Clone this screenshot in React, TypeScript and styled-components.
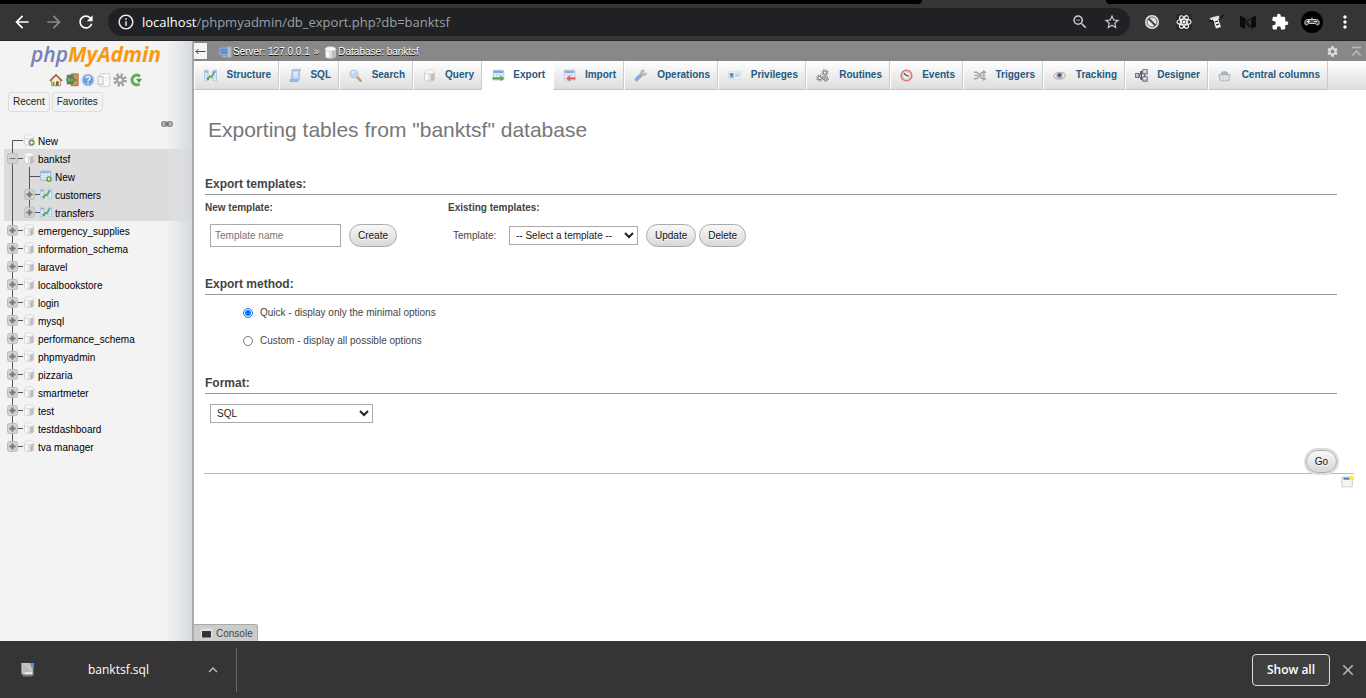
import React from "react";
import styled, { createGlobalStyle } from "styled-components";
import {
  MdArrowBack,
  MdArrowForward,
  MdClose,
  MdExpandLess,
  MdExtension,
  MdInfoOutline,
  MdMoreVert,
  MdRefresh,
  MdSettings,
  MdStarBorder,
  MdZoomOut,
} from "react-icons/md";

const GlobalStyle = createGlobalStyle`
  * { box-sizing: border-box; }
  body {
    margin: 0;
    font-family: "Liberation Sans", Arial, sans-serif;
    font-size: 10px;
    line-height: 12px;
    color: #444;
    background: #fff;
  }
  button, input, select { font-family: inherit; font-size: 10px; }
  svg { display: block; flex: none; }
`;

/* ---------- Icons ---------- */

type IconName =
  | "structure" | "sql" | "search" | "db" | "export" | "import" | "operations"
  | "privileges" | "routines" | "events" | "triggers" | "tracking" | "designer"
  | "central" | "home" | "exit" | "help" | "docs" | "gear" | "reload" | "newdb"
  | "newtable" | "server" | "link" | "console" | "window" | "file";

const gearTeeth = (cx: number, cy: number, r: number, color: string) => (
  <>
    <circle cx={cx} cy={cy} r={r} fill="none" stroke={color} strokeWidth={r * 0.6} strokeDasharray={`${r * 0.42} ${r * 0.365}`} />
    <circle cx={cx} cy={cy} r={r * 0.6} fill="#ddd" stroke={color} strokeWidth={r * 0.4} />
    <circle cx={cx} cy={cy} r={r * 0.2} fill="#fff" />
  </>
);

const cylinder = (
  <>
    <path d="M1.800 3.500v9c0 3.600 12.400 3.600 12.400 0v-9z" fill="#e4e4e4" stroke="#c6c6c6" strokeWidth=".8" />
    <path d="M9.500 6v9c2.500 0 4.300-.8 4.300-2V4.500z" fill="#bdbdbd" />
    <path d="M4.500 6v8" stroke="#fff" strokeWidth="2.500" />
    <ellipse cx="8" cy="3.500" rx="6.200" ry="2.600" fill="#f7f7f7" stroke="#cfcfcf" strokeWidth=".8" />
  </>
);

const drawings: Record<IconName, React.ReactNode> = {
  structure: (
    <>
      <path d="M.5 1.500h4.500v13H.5zM11 1.500h4.500v13H11z" fill="#e3effa" stroke="#9dc0e2" />
      <path d="M1 3.500h4M11 3.500h4" stroke="#86b1dc" strokeWidth="2" />
      <path d="M1 7.500h4M1 11h4M11 7.500h4M11 11h4" stroke="#b8d2ea" />
      <path d="M4.500 12.500L7 9l2 1 3.500-6" fill="none" stroke="#5aa860" strokeWidth="2.200" />
      <circle cx="4.800" cy="12" r="1.600" fill="#4f9c56" />
    </>
  ),
  sql: (
    <>
      <path d="M4 1h10.500l-2 2v9.500l-2 2.500H1.500L3.500 12z" fill="#c4dcf6" stroke="#719fd4" />
      <path d="M1.500 15c-1-2 .5-3 2-2.500h7c-1 .8-1 2 0 2.500z" fill="#a4c6ee" stroke="#719fd4" strokeWidth=".8" />
      <path d="M5.500 4.500h5M5.500 7h5" stroke="#e8f2fd" strokeWidth="1.400" />
    </>
  ),
  search: (
    <>
      <path d="M9.500 9.500l5 5" stroke="#d09a55" strokeWidth="3" strokeLinecap="round" />
      <circle cx="6" cy="6" r="4.800" fill="#bcd8f5" stroke="#b5cbe2" strokeWidth="1.400" />
      <path d="M3.500 5.500c.5-1.500 2-2.200 3.500-2" fill="none" stroke="#fff" strokeWidth="1.300" />
    </>
  ),
  db: cylinder,
  export: (
    <>
      <path d="M1.500 1.500h13v12h-13z" fill="#eef5fb" stroke="#a9c4de" />
      <path d="M2 3.500h12" stroke="#7fa9d4" strokeWidth="3" />
      <path d="M2 7.500h12M6 5v8M10 5v8" stroke="#b8cfe4" />
      <path d="M1 10.500h9.500V8.500l4.500 3-4.500 3v-2H1z" fill="#57a85b" stroke="#4c9152" strokeWidth=".5" />
    </>
  ),
  import: (
    <>
      <path d="M1.500 1.500h13v12h-13z" fill="#eef2fb" stroke="#b4c0e0" />
      <path d="M2 3.500h12" stroke="#97abda" strokeWidth="3" />
      <path d="M2 7.500h12M6 5v8M10 5v8" stroke="#c4cde6" />
      <path d="M15 10.500H8.500V8L4 11.500 8.500 15v-2.500H15z" fill="#ec6060" stroke="#dc5050" strokeWidth=".5" />
    </>
  ),
  operations: (
    <>
      <path d="M3 13l4.500-4.500" stroke="#86a9e6" strokeWidth="4.500" strokeLinecap="round" />
      <path d="M7.500 8.500l3-3" stroke="#aaa" strokeWidth="3" />
      <path d="M12.500 1.200a3.500 3.500 0 1 0 2.800 3.600L12.500 5.500l-1.500-1.500z" fill="#c4c4c4" stroke="#9a9a9a" strokeWidth=".8" />
    </>
  ),
  privileges: (
    <>
      <path d="M.5 3.500h15v9H.5z" fill="#eef4f8" stroke="#d2dde4" />
      <path d="M2 5h5v6H2z" fill="#78b0e0" />
      <circle cx="4.500" cy="7" r="1.400" fill="#4d6c94" />
      <path d="M9 6h2M12 6h2M9 8.500h5" stroke="#86aecb" strokeWidth="1.200" />
    </>
  ),
  routines: (
    <>
      {gearTeeth(11, 4.5, 3.4, "#8a8a8a")}
      {gearTeeth(4.5, 11, 3.4, "#8a8a8a")}
      {gearTeeth(12, 12, 2.8, "#777")}
    </>
  ),
  events: (
    <>
      <circle cx="8" cy="8" r="6.500" fill="#f2f2f2" stroke="#e4756e" strokeWidth="2" />
      <circle cx="8" cy="8" r="4.800" fill="none" stroke="#bbb" strokeWidth=".8" />
      <path d="M4.800 5.500L8 8l3 .8" fill="none" stroke="#444" strokeWidth="1.500" />
    </>
  ),
  triggers: (
    <g fill="none" stroke="#a5a5a5" strokeWidth="1.700">
      <path d="M1 4h3c4 0 4 8 8 8h3M1 12h3c4 0 4-8 8-8h3" />
      <path d="M2 8h4M12.500 2l2.500 2-2.500 2.200M12.500 9.800L15 12l-2.500 2M10 8h5" />
    </g>
  ),
  tracking: (
    <>
      <path d="M.7 8.500C3 3.500 12 2 15.300 7.500 14 13.500 4 14.500.7 8.500z" fill="#f7efe9" stroke="#e3a67c" strokeWidth="1.300" />
      <circle cx="8" cy="8" r="3.800" fill="#79a4e2" />
      <circle cx="8" cy="7.600" r="1.700" fill="#2c4470" />
    </>
  ),
  designer: (
    <g fill="#c4c4ea" stroke="#555" strokeWidth="1">
      <path d="M.5 5.500h4.500v5H.5zM9.500.8h5.500v5.500H9.500zM9.500 9.500h5.500v5.500H9.500z" />
      <path d="M5 8L8 4.500v7.500zM9 3H7v2M9 12.500H7V11M12 6v3.500" fill="none" strokeWidth="1.300" />
      <path d="M10 2.500h4M10 11.500h4" stroke="#fff" />
    </g>
  ),
  central: (
    <>
      <path d="M4 8c0-6 8-6 8 0" fill="#9cc3e4" stroke="#8ab0d0" strokeWidth="1.500" />
      <path d="M1 7h14l-1.500 7.500h-11z" fill="#cfcfcf" stroke="#adadad" />
      <path d="M2 9.500h12M2.500 12h11M5 7.500v7M8 7.500v7M11 7.500v7" stroke="#f1f1f1" strokeWidth=".7" />
    </>
  ),
  home: (
    <>
      <path d="M3 8l5-5 5 5v6.500H3z" fill="#f5ecd9" stroke="#a88555" />
      <path d="M1 9l7-7 7 7" fill="none" stroke="#a5663d" strokeWidth="1.800" />
      <path d="M4 10h2.500v4.500H4z" fill="#71ad4b" />
      <path d="M8 9.500h3V14.500H8z" fill="#8c5b33" />
    </>
  ),
  exit: (
    <>
      <path d="M7 1h8v13.500H7z" fill="#cd9a58" stroke="#96693a" />
      <path d="M2 2h8v11H2z" fill="#6d7a70" />
      <path d="M1 7.500L6 3.500v2.500h4v4H6v2z" fill="#63b454" stroke="#35762f" strokeWidth=".7" />
      <path d="M12 7v2" stroke="#6b4720" strokeWidth="1.500" />
    </>
  ),
  help: (
    <>
      <circle cx="8" cy="8" r="6.800" fill="#6f9fdd" stroke="#c2d3ea" strokeWidth="1.500" />
      <path d="M5.800 6.200c0-3 4.600-2.800 4.400 0-.1 1.500-2.200 1.700-2.200 3.300" fill="none" stroke="#fff" strokeWidth="1.500" />
      <circle cx="8" cy="11.800" r="1" fill="#fff" />
    </>
  ),
  docs: (
    <>
      <path d="M3.500.8h11v14.400h-11z" fill="#fcfcfc" stroke="#c9c9c9" />
      <path d="M1 4h6v9H1z" fill="#f0f0f0" stroke="#bdbdbd" />
      <path d="M9 5.500h4M9 8h4" stroke="#ddd" />
    </>
  ),
  gear: gearTeeth(8, 8, 6, "#a0a0a0"),
  reload: (
    <>
      <path d="M12.500 3.800A5.500 5.500 0 1 0 12 12.500" fill="none" stroke="#62ad62" strokeWidth="3.600" />
      <path d="M8 6.500h7l-3.500 5z" fill="#4f9f52" />
    </>
  ),
  newdb: (
    <>
      {cylinder}
      <circle cx="11.500" cy="11.500" r="4" fill="#5d9e3c" />
      <path d="M11.500 9.200v4.600M9.200 11.500h4.600" stroke="#fff" strokeWidth="1.500" />
    </>
  ),
  newtable: (
    <>
      <path d="M1 1.500h13v12H1z" fill="#f2f8fd" stroke="#7ba7d6" />
      <path d="M1 3h13" stroke="#8cb7e4" strokeWidth="3" />
      <path d="M1 7.500h13M1 10.500h13M5 4v9M9.500 4v9" stroke="#b8d2ee" />
      <circle cx="12" cy="12" r="3.800" fill="#5d9e3c" />
      <path d="M12 10v4M10 12h4" stroke="#fff" strokeWidth="1.400" />
    </>
  ),
  server: (
    <>
      <path d="M10 1h5v13h-5z" fill="#b9bcc2" stroke="#9ea3aa" />
      <path d="M1 2.500h10v8H1z" fill="#5d8fd8" stroke="#a9b9cf" />
      <path d="M4 13h5M6 11v2" stroke="#b3b3b3" strokeWidth="1.800" />
    </>
  ),
  link: (
    <g fill="#ccc" stroke="#888" strokeWidth="2">
      <rect x="1" y="5" width="7" height="6" rx="3" />
      <rect x="8" y="5" width="7" height="6" rx="3" />
      <path d="M5 8h6" stroke="#666" />
    </g>
  ),
  console: (
    <>
      <path d="M1 2h14v12H1z" fill="#e0e0e0" />
      <path d="M2.500 5h11v8h-11z" fill="#333" />
    </>
  ),
  window: (
    <>
      <path d="M1 2.500h13v12H1z" fill="#f4f4f4" stroke="#c5c5c5" />
      <path d="M3 4.500h8" stroke="#5379ad" strokeWidth="2.500" />
      <circle cx="13" cy="4" r="3" fill="#f5ec4a" />
    </>
  ),
  file: (
    <>
      <path d="M1.500 1h10l3 3v10l-2 1.500H3z" fill="#7f7f7f" />
      <path d="M1.500 1h9l3 2.500V13h-12z" fill="#c2c4bf" />
      <path d="M11 1h4v4.500h-3z" fill="#4d8fdc" />
      <path d="M3 3l7 7M3 7l5 4" stroke="#a4a7a2" />
      <path d="M5 11h8v2H5z" fill="#f2f2f2" />
    </>
  ),
};

const Icon = ({ name, size = 13 }: { name: IconName; size?: number }) => (
  <svg width={size} height={size} viewBox="0 0 16 16" aria-hidden="true">
    {drawings[name]}
  </svg>
);

/* ---------- Browser frame ---------- */

const Screen = styled.div`
  display: flex;
  flex-direction: column;
  height: 100vh;
  min-width: 1200px;
  overflow: hidden;
`;

const TabStrip = styled.div`
  display: flex;
  flex: none;
  height: 4px;
  background: #353535;
`;

const StripSide = styled.div<{ $grow: number; $side: "left" | "right" }>`
  flex: ${(p) => p.$grow} 1 0;
  background: #000;
  border-radius: ${(p) => (p.$side === "left" ? "0 0 6px 0" : "0 0 0 6px")};
`;

const ActiveStrip = styled.div`
  flex: 184 1 0;
`;

const Toolbar = styled.header`
  display: flex;
  align-items: center;
  flex: none;
  height: 37px;
  padding: 0 11px 0 12px;
  background: #353535;
  border-bottom: 1px solid #282528;
  font-family: "Open Sans", "Noto Sans", sans-serif;
`;

const NavButtons = styled.div`
  display: flex;
  gap: 12px;
`;

const IconButton = styled.button<{ $color?: string }>`
  display: flex;
  align-items: center;
  justify-content: center;
  padding: 0;
  border: 0;
  background: none;
  color: ${(p) => p.$color ?? "#fff"};
`;

const AddressBar = styled.div`
  display: flex;
  align-items: center;
  flex: 1;
  height: 28px;
  margin-left: 12px;
  padding: 0 9px;
  gap: 7px;
  border-radius: 14px;
  background: #202124;
  color: #e8eaed;
`;

const Url = styled.div`
  flex: 1;
  font-size: 13px;
  line-height: 20px;
  color: #9aa0a6;
`;

const Host = styled.span`
  color: #fff;
`;

const AddressActions = styled.div`
  display: flex;
  gap: 14px;
`;

const Extensions = styled.div`
  display: flex;
  align-items: center;
  gap: 14px;
  margin-left: 13px;
`;

const Avatar = styled.span`
  display: flex;
  align-items: center;
  justify-content: center;
  width: 22px;
  height: 22px;
  margin: 0 -2px;
  border-radius: 50%;
  background: #000;
`;

const Page = styled.div`
  display: flex;
  flex: 1;
  min-height: 0;
`;

const DownloadBar = styled.footer`
  display: flex;
  align-items: center;
  flex: none;
  height: 57px;
  padding-right: 9px;
  background: #353535;
  color: #fff;
  font-family: "Open Sans", "Noto Sans", sans-serif;
`;

const DownloadItem = styled.div`
  display: flex;
  align-items: center;
  width: 237px;
  height: 44px;
  padding: 0 14px 0 20px;
  border-right: 1px solid #6a6a6a;
`;

const FileName = styled.span`
  flex: 1;
  margin-left: 53px;
  font-size: 12px;
  line-height: 18px;
`;

const ShowAll = styled.button`
  width: 78px;
  height: 32px;
  margin-left: auto;
  margin-right: 9px;
  padding: 0;
  border: 1px solid #dcdcdc;
  border-radius: 4px;
  background: #404040;
  color: #fff;
  font-size: 12px;
  font-weight: 600;
`;

/* ---------- Navigation panel ---------- */

const Sidebar = styled.nav`
  display: flex;
  flex-direction: column;
  flex: none;
  width: 194px;
  background: linear-gradient(to right, #f3f3f3 86%, #e6e8ea 93%, #d6dade 100%);
  border-right: 2px solid #aaa;
`;

const Logo = styled.a`
  align-self: center;
  font-family: "Open Sans", sans-serif;
  font-size: 21px;
  font-weight: 700;
  font-style: italic;
  line-height: 26px;
  color: #f79a13;
  text-decoration: none;
`;

const LogoLead = styled.span`
  color: #7880b8;
  font-weight: 600;
`;

const QuickLinks = styled.div`
  display: flex;
  gap: 2px;
  margin: 6px 0 0 49px;
`;

const QuickLink = styled.a`
  display: flex;
`;

const RecentBar = styled.div`
  display: flex;
  gap: 2px;
  margin: 5px 0 0 8px;
`;

const RecentButton = styled.button`
  height: 20px;
  padding: 0 4px;
  border: 1px solid #ddd;
  border-radius: 3px;
  background: #f2f2f2;
  color: #222;
  line-height: 12px;
`;

const LinkToggle = styled.button`
  display: flex;
  align-self: flex-end;
  margin: 6px 19px 1px 0;
  padding: 0;
  border: 0;
  background: none;
`;

const Tree = styled.ul`
  margin: 0 0 0 4px;
  padding: 0;
  list-style: none;
`;

const TreeRow = styled.li<{ $active?: boolean }>`
  display: flex;
  align-items: center;
  height: 18px;
  padding-left: 2px;
  background: ${(p) => (p.$active ? "linear-gradient(to right, #dcdcdc 85%, rgba(214, 216, 218, 0.6) 100%)" : "none")};
`;

const TreeToggle = styled.button`
  padding: 0;
  border: 0;
  background: none;
`;

const TreeLink = styled.a`
  margin-left: 3px;
  padding-top: 4px;
  color: #000;
  text-decoration: none;
`;

type Joint = "top" | "minus" | "plus" | "last" | "leaf";

const TreeJoint = ({ kind }: { kind: Joint }) => (
  <svg width="17" height="18" viewBox="0 0 17 18" aria-hidden="true">
    <g stroke="#555" strokeWidth="1" fill="none">
      {kind === "top" && <path d="M17 9.500H6.500V18" />}
      {kind === "leaf" && <path d="M6.500 0V18M6.500 9.500H17" />}
      {(kind === "plus" || kind === "minus") && <path d="M6.500 0V18M12 9.500H17" />}
      {kind === "last" && <path d="M6.500 0V9M12 9.500H17" />}
    </g>
    {(kind === "plus" || kind === "minus" || kind === "last") && (
      <>
        <rect x="1.500" y="4.500" width="10" height="10" rx="2" fill="#d2d2d2" stroke="#bcbcbc" />
        <path d={kind === "minus" ? "M3.500 9.500h6" : "M3.500 9.500h6M6.500 6.500v6"} stroke="#777" strokeWidth={kind === "minus" ? 1 : 2} />
      </>
    )}
  </svg>
);

const TreeRail = () => (
  <svg width="17" height="18" viewBox="0 0 17 18" aria-hidden="true">
    <path d="M6.500 0V18" stroke="#555" />
  </svg>
);

interface TreeItem {
  label: string;
  icon: IconName;
  joint: Joint;
  child?: boolean;
  active?: boolean;
}

const treeItems: TreeItem[] = [
  { label: "New", icon: "newdb", joint: "top" },
  { label: "banktsf", icon: "db", joint: "minus", active: true },
  { label: "New", icon: "newtable", joint: "leaf", child: true, active: true },
  { label: "customers", icon: "structure", joint: "plus", child: true, active: true },
  { label: "transfers", icon: "structure", joint: "last", child: true, active: true },
  ...[
    "emergency_supplies", "information_schema", "laravel", "localbookstore", "login", "mysql",
    "performance_schema", "phpmyadmin", "pizzaria", "smartmeter", "test", "testdashboard",
  ].map((label): TreeItem => ({ label, icon: "db", joint: "plus" })),
  { label: "tva manager", icon: "db", joint: "last" },
];

/* ---------- Main panel ---------- */

const Main = styled.main`
  display: flex;
  flex-direction: column;
  flex: 1;
  min-width: 0;
  background: #fff;
`;

const ServerBar = styled.div`
  display: flex;
  align-items: center;
  height: 20px;
  padding-right: 3px;
  background: #888;
  color: #fff;
  text-shadow: 0 1px 0 #000;
`;

const CollapseButton = styled.button`
  display: flex;
  align-items: center;
  justify-content: center;
  width: 13px;
  height: 16px;
  padding: 0;
  border: 0;
  background: #f3f3f3;
`;

const Crumbs = styled.div`
  display: flex;
  align-items: center;
  flex: 1;
  gap: 1px;
  margin-left: 12px;
  padding-top: 2px;
`;

const Crumb = styled.a`
  color: #fff;
  text-decoration: none;
`;

const CrumbArrow = styled.span`
  margin: 0 4px 0 3px;
`;

const BarActions = styled.div`
  display: flex;
  gap: 11px;
`;

const Tabs = styled.div`
  display: flex;
  height: 29px;
  background: linear-gradient(#fff, #dcdcdc);
`;

const Tab = styled.a<{ $width: number; $active?: boolean }>`
  display: flex;
  align-items: center;
  justify-content: space-between;
  flex: 0 0 ${(p) => p.$width}px;
  padding: 0 7px 0 9px;
  border-left: 1px solid #fff;
  border-right: 1px solid ${(p) => (p.$active ? "#fff" : "#ccc")};
  border-bottom: 1px solid ${(p) => (p.$active ? "#fff" : "#c4c4c4")};
  background: ${(p) => (p.$active ? "#fff" : "none")};
  color: #235a81;
  font-weight: 700;
  text-decoration: none;
`;

const tabs: { label: string; icon: IconName; width: number }[] = [
  { label: "Structure", icon: "structure", width: 85 },
  { label: "SQL", icon: "sql", width: 60 },
  { label: "Search", icon: "search", width: 74 },
  { label: "Query", icon: "db", width: 69 },
  { label: "Export", icon: "export", width: 71 },
  { label: "Import", icon: "import", width: 71 },
  { label: "Operations", icon: "operations", width: 94 },
  { label: "Privileges", icon: "privileges", width: 88 },
  { label: "Routines", icon: "routines", width: 84 },
  { label: "Events", icon: "events", width: 73 },
  { label: "Triggers", icon: "triggers", width: 80 },
  { label: "Tracking", icon: "tracking", width: 82 },
  { label: "Designer", icon: "designer", width: 83 },
  { label: "Central columns", icon: "central", width: 120 },
];

const Content = styled.form`
  flex: 1;
  padding: 28px 12px 0 10px;
`;

const Title = styled.h1`
  margin: 0 4px 35px;
  font-size: 21px;
  font-weight: 400;
  line-height: 24px;
  color: #777;
`;

const Section = styled.section<{ $height: number }>`
  min-height: ${(p) => p.$height}px;
  margin: 0 17px 0 1px;
`;

const SectionTitle = styled.h2`
  margin: 0;
  padding-bottom: 2px;
  border-bottom: 1px solid #999;
  font-size: 12px;
  line-height: 15px;
`;

const TemplateColumns = styled.div`
  display: flex;
  padding-top: 7px;
`;

const TemplateGroup = styled.div<{ $width?: number }>`
  flex: 0 0 ${(p) => (p.$width ? `${p.$width}px` : "auto")};
`;

const GroupTitle = styled.h3`
  margin: 0;
  font-size: 10px;
  line-height: 12px;
`;

const Controls = styled.div`
  display: flex;
  align-items: center;
  margin-left: 5px;
  padding-top: 10px;
`;

const TextInput = styled.input`
  width: 131px;
  height: 23px;
  margin: 0 8px 0 0;
  padding: 0 4px;
  border: 1px solid #aaa;
  &::placeholder { color: #757575; }
`;

const PillButton = styled.button<{ $focus?: boolean }>`
  height: 23px;
  margin-right: 3px;
  padding: 0 8px;
  border: 1px solid #aaa;
  border-radius: 12px;
  background: linear-gradient(#f8f8f8, #d8d8d8);
  color: #111;
  text-shadow: 0 1px 0 #fff;
  box-shadow: ${(p) => (p.$focus ? "0 0 0 2px #ddd" : "none")};
`;

const FieldLabel = styled.label`
  width: 56px;
`;

const Select = styled.select<{ $width: number }>`
  width: ${(p) => p.$width}px;
  height: 19px;
  margin-right: 8px;
  padding: 0 2px;
  border: 1px solid #aaa;
  border-radius: 0;
  background: #fff;
  color: #222;
`;

const RadioList = styled.div`
  display: flex;
  flex-direction: column;
  gap: 12px;
  padding: 10px 0 0 38px;
`;

const RadioLabel = styled.label`
  display: flex;
  align-items: center;
  gap: 7px;
  height: 16px;
`;

const Radio = styled.input`
  width: 10px;
  height: 10px;
  margin: 0;
`;

const SubmitRow = styled.div`
  display: flex;
  justify-content: flex-end;
  padding-right: 14px;
  border-bottom: 1px solid #bbb;
`;

const PageLink = styled.a`
  display: flex;
  justify-content: flex-end;
  padding-top: 1px;
`;

const ConsoleTab = styled.button`
  display: flex;
  align-items: center;
  align-self: flex-start;
  gap: 3px;
  height: 17px;
  padding: 0 4px 0 6px;
  border: 1px solid #aaa;
  border-width: 1px 1px 0 0;
  border-radius: 0 3px 0 0;
  background: #ccc;
  color: #444;
`;

const BlockedIcon = () => (
  <svg width="18" height="18" viewBox="0 0 18 18" aria-hidden="true">
    <circle cx="9" cy="9" r="7" fill="#e5e5e5" />
    <circle cx="9" cy="9" r="5" fill="none" stroke="#666" strokeWidth="1" />
    <path d="M5.500 5.500l7 7" stroke="#444" strokeWidth="2" />
  </svg>
);

const AtomIcon = () => (
  <svg width="18" height="18" viewBox="0 0 18 18" aria-hidden="true">
    <path d="M1 1h16v16H1z" fill="#2a2a2a" />
    <g fill="none" stroke="#f0f0f0" strokeWidth="1.200">
      <ellipse cx="9" cy="9" rx="7" ry="2.800" />
      <ellipse cx="9" cy="9" rx="7" ry="2.800" transform="rotate(60 9 9)" />
      <ellipse cx="9" cy="9" rx="7" ry="2.800" transform="rotate(120 9 9)" />
    </g>
    <circle cx="9" cy="9" r="1.500" fill="#fff" />
  </svg>
);

const ScrollIcon = () => (
  <svg width="18" height="18" viewBox="0 0 18 18" aria-hidden="true">
    <path d="M2.500 5l9-2.500L13 5.500l-8 2.500z" fill="#ddd" />
    <path d="M6 7l5-1.500L14 14l-5 1.500z" fill="#f3f3f3" />
    <path d="M2 8.500l3.500-1 1.500 3M12.500 6L16.500 2M8 9l3-1M9 12l3-1" fill="none" stroke="#111" strokeWidth="1.200" />
  </svg>
);

const RibbonIcon = () => (
  <svg width="18" height="18" viewBox="0 0 18 18" aria-hidden="true">
    <path d="M1 2.500l5 2.500v11l-5-2.500zM12 5l5-2.500v11L12 16z" fill="#0c0c0c" />
    <path d="M6 5l6 8-2.500 2L6 9zM12 5L9.500 8.500 8 6.500z" fill="#181818" />
  </svg>
);

const GamepadIcon = () => (
  <svg width="16" height="16" viewBox="0 0 16 16" aria-hidden="true">
    <path d="M3.500 5.500h9c3 0 3.500 5 1.500 5.500-1.500.3-2-1.500-3.300-1.500H5.300C4 9.500 3.500 11.300 2 11 0 10.500.5 5.500 3.500 5.500z" fill="#555" stroke="#ccc" strokeWidth="1" />
    <path d="M3 7.500h3M4.500 6v3M10 7.500h3M8 5V3.500" stroke="#ddd" />
  </svg>
);

const CollapseArrow = () => (
  <svg width="11" height="9" viewBox="0 0 11 9" aria-hidden="true">
    <path d="M10.500 4.500H1M3.500 2L1 4.500 3.500 7" fill="none" stroke="#444" />
  </svg>
);

const ToTopIcon = () => (
  <svg width="13" height="13" viewBox="0 0 13 13" aria-hidden="true">
    <path d="M2 2.500h9M2.500 10.500l4-4.500 4 4.500" fill="none" stroke="#bbb" strokeWidth="1.500" />
  </svg>
);

const quickLinks: { icon: IconName; label: string }[] = [
  { icon: "home", label: "Home" },
  { icon: "exit", label: "Log out" },
  { icon: "help", label: "phpMyAdmin documentation" },
  { icon: "docs", label: "Documentation" },
  { icon: "gear", label: "Navigation panel settings" },
  { icon: "reload", label: "Reload navigation panel" },
];

export default function App() {
  return (
    <Screen>
      <GlobalStyle />
      <TabStrip>
        <StripSide $grow={922} $side="left" />
        <ActiveStrip />
        <StripSide $grow={260} $side="right" />
      </TabStrip>
      <Toolbar>
        <NavButtons>
          <IconButton aria-label="Back"><MdArrowBack size={20} /></IconButton>
          <IconButton aria-label="Forward" $color="#8a8a8a"><MdArrowForward size={20} /></IconButton>
          <IconButton aria-label="Reload"><MdRefresh size={20} /></IconButton>
        </NavButtons>
        <AddressBar>
          <MdInfoOutline size={18} />
          <Url><Host>localhost</Host>/phpmyadmin/db_export.php?db=banktsf</Url>
          <AddressActions>
            <IconButton aria-label="Zoom" $color="#c8cacd"><MdZoomOut size={18} /></IconButton>
            <IconButton aria-label="Bookmark" $color="#c8cacd"><MdStarBorder size={18} /></IconButton>
          </AddressActions>
        </AddressBar>
        <Extensions>
          <IconButton aria-label="Blocker"><BlockedIcon /></IconButton>
          <IconButton aria-label="React tools"><AtomIcon /></IconButton>
          <IconButton aria-label="Scroll"><ScrollIcon /></IconButton>
          <IconButton aria-label="Reader"><RibbonIcon /></IconButton>
          <IconButton aria-label="Extensions"><MdExtension size={18} /></IconButton>
          <Avatar><GamepadIcon /></Avatar>
          <IconButton aria-label="Menu"><MdMoreVert size={20} /></IconButton>
        </Extensions>
      </Toolbar>

      <Page>
        <Sidebar>
          <Logo href="#"><LogoLead>php</LogoLead>MyAdmin</Logo>
          <QuickLinks>
            {quickLinks.map((q) => (
              <QuickLink key={q.icon} href="#" aria-label={q.label}><Icon name={q.icon} size={14} /></QuickLink>
            ))}
          </QuickLinks>
          <RecentBar>
            <RecentButton>Recent</RecentButton>
            <RecentButton>Favorites</RecentButton>
          </RecentBar>
          <LinkToggle aria-label="Link with main panel"><Icon name="link" size={12} /></LinkToggle>
          <Tree>
            {treeItems.map((item, i) => (
              <TreeRow key={i} $active={item.active}>
                {item.child && <TreeRail />}
                {item.joint === "top" || item.joint === "leaf" ? (
                  <TreeJoint kind={item.joint} />
                ) : (
                  <TreeToggle aria-label={`Toggle ${item.label}`}><TreeJoint kind={item.joint} /></TreeToggle>
                )}
                <Icon name={item.icon} size={12} />
                <TreeLink href="#">{item.label}</TreeLink>
              </TreeRow>
            ))}
          </Tree>
        </Sidebar>

        <Main>
          <ServerBar>
            <CollapseButton aria-label="Hide panel"><CollapseArrow /></CollapseButton>
            <Crumbs>
              <Icon name="server" />
              <Crumb href="#">Server: 127.0.0.1</Crumb>
              <CrumbArrow>»</CrumbArrow>
              <Icon name="db" />
              <Crumb href="#">Database: banktsf</Crumb>
            </Crumbs>
            <BarActions>
              <IconButton aria-label="Page settings" $color="#ddd"><MdSettings size={13} /></IconButton>
              <IconButton aria-label="Scroll to top"><ToTopIcon /></IconButton>
            </BarActions>
          </ServerBar>
          <Tabs>
            {tabs.map((t) => (
              <Tab key={t.label} href="#" $width={t.width} $active={t.label === "Export"}>
                <Icon name={t.icon} />
                {t.label}
              </Tab>
            ))}
          </Tabs>

          <Content onSubmit={(e) => e.preventDefault()}>
            <Title>Exporting tables from "banktsf" database</Title>

            <Section $height={100}>
              <SectionTitle>Export templates:</SectionTitle>
              <TemplateColumns>
                <TemplateGroup $width={243}>
                  <GroupTitle>New template:</GroupTitle>
                  <Controls>
                    <TextInput aria-label="Template name" placeholder="Template name" />
                    <PillButton type="button">Create</PillButton>
                  </Controls>
                </TemplateGroup>
                <TemplateGroup>
                  <GroupTitle>Existing templates:</GroupTitle>
                  <Controls>
                    <FieldLabel htmlFor="template">Template:</FieldLabel>
                    <Select id="template" $width={129}>
                      <option>-- Select a template --</option>
                    </Select>
                    <PillButton type="button">Update</PillButton>
                    <PillButton type="button">Delete</PillButton>
                  </Controls>
                </TemplateGroup>
              </TemplateColumns>
            </Section>

            <Section $height={99}>
              <SectionTitle>Export method:</SectionTitle>
              <RadioList>
                <RadioLabel>
                  <Radio type="radio" name="method" defaultChecked />
                  Quick - display only the minimal options
                </RadioLabel>
                <RadioLabel>
                  <Radio type="radio" name="method" />
                  Custom - display all possible options
                </RadioLabel>
              </RadioList>
            </Section>

            <Section $height={74}>
              <SectionTitle>Format:</SectionTitle>
              <Controls>
                <Select aria-label="Format" $width={163}>
                  <option>SQL</option>
                </Select>
              </Controls>
            </Section>

            <SubmitRow>
              <PillButton type="submit" $focus>Go</PillButton>
            </SubmitRow>
            <PageLink href="#" aria-label="Open new window"><Icon name="window" /></PageLink>
          </Content>

          <ConsoleTab type="button">
            <Icon name="console" />
            Console
          </ConsoleTab>
        </Main>
      </Page>

      <DownloadBar>
        <DownloadItem>
          <Icon name="file" size={15} />
          <FileName>banktsf.sql</FileName>
          <IconButton aria-label="More" $color="#bbb"><MdExpandLess size={18} /></IconButton>
        </DownloadItem>
        <ShowAll>Show all</ShowAll>
        <IconButton aria-label="Close" $color="#bbb"><MdClose size={18} /></IconButton>
      </DownloadBar>
    </Screen>
  );
}
